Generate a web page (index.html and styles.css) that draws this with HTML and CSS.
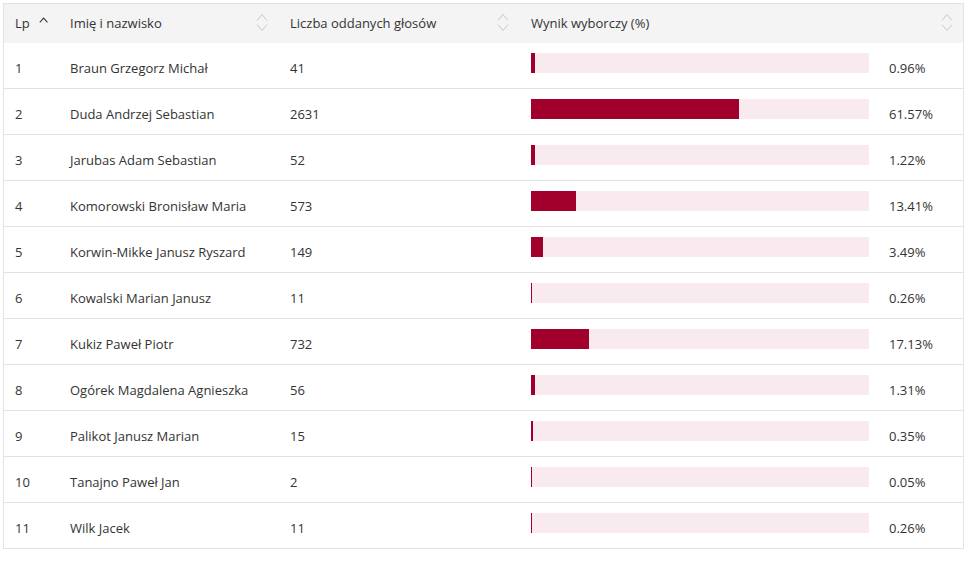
FILE: index.html
```html
<!DOCTYPE html>
<html lang="pl">
<head>
<meta charset="utf-8">
<title>Wyniki</title>
<link rel="stylesheet" href="styles.css">
</head>
<body>
<div class="results">
  <div class="head">
    <div class="hcell hcell-lp">
      <span>Lp</span>
      <svg class="sort-up" width="12" height="8" viewBox="0 0 12 8"><path d="M1 7 L6 1.5 L11 7" fill="none" stroke="#333" stroke-width="1.3"/></svg>
    </div>
    <div class="hcell">
      <span>Imię i nazwisko</span>
      <svg class="sort" width="12" height="20" viewBox="0 0 12 20"><path d="M1 7.5 L6 1.5 L11 7.5 M1 11.5 L6 17.5 L11 11.5" fill="none" stroke="#c8c8c8" stroke-width="1"/></svg>
    </div>
    <div class="hcell">
      <span>Liczba oddanych głosów</span>
      <svg class="sort" width="12" height="20" viewBox="0 0 12 20"><path d="M1 7.5 L6 1.5 L11 7.5 M1 11.5 L6 17.5 L11 11.5" fill="none" stroke="#c8c8c8" stroke-width="1"/></svg>
    </div>
    <div class="hcell">
      <span>Wynik wyborczy (%)</span>
      <svg class="sort" width="12" height="20" viewBox="0 0 12 20"><path d="M1 7.5 L6 1.5 L11 7.5 M1 11.5 L6 17.5 L11 11.5" fill="none" stroke="#c8c8c8" stroke-width="1"/></svg>
    </div>
  </div>

  <div class="row"><div class="cell">1</div><div class="cell">Braun Grzegorz Michał</div><div class="cell">41</div><div class="cell cell-bar"><div class="bar"><div class="fill" style="width:4px"></div></div><span class="pct">0.96%</span></div></div>
  <div class="row"><div class="cell">2</div><div class="cell">Duda Andrzej Sebastian</div><div class="cell">2631</div><div class="cell cell-bar"><div class="bar"><div class="fill" style="width:61.57%"></div></div><span class="pct">61.57%</span></div></div>
  <div class="row"><div class="cell">3</div><div class="cell">Jarubas Adam Sebastian</div><div class="cell">52</div><div class="cell cell-bar"><div class="bar"><div class="fill" style="width:1.22%"></div></div><span class="pct">1.22%</span></div></div>
  <div class="row"><div class="cell">4</div><div class="cell">Komorowski Bronisław Maria</div><div class="cell">573</div><div class="cell cell-bar"><div class="bar"><div class="fill" style="width:13.41%"></div></div><span class="pct">13.41%</span></div></div>
  <div class="row"><div class="cell">5</div><div class="cell">Korwin-Mikke Janusz Ryszard</div><div class="cell">149</div><div class="cell cell-bar"><div class="bar"><div class="fill" style="width:3.49%"></div></div><span class="pct">3.49%</span></div></div>
  <div class="row"><div class="cell">6</div><div class="cell">Kowalski Marian Janusz</div><div class="cell">11</div><div class="cell cell-bar"><div class="bar"><div class="fill" style="width:1px"></div></div><span class="pct">0.26%</span></div></div>
  <div class="row"><div class="cell">7</div><div class="cell">Kukiz Paweł Piotr</div><div class="cell">732</div><div class="cell cell-bar"><div class="bar"><div class="fill" style="width:17.13%"></div></div><span class="pct">17.13%</span></div></div>
  <div class="row"><div class="cell">8</div><div class="cell">Ogórek Magdalena Agnieszka</div><div class="cell">56</div><div class="cell cell-bar"><div class="bar"><div class="fill" style="width:1.31%"></div></div><span class="pct">1.31%</span></div></div>
  <div class="row"><div class="cell">9</div><div class="cell">Palikot Janusz Marian</div><div class="cell">15</div><div class="cell cell-bar"><div class="bar"><div class="fill" style="width:2px"></div></div><span class="pct">0.35%</span></div></div>
  <div class="row"><div class="cell">10</div><div class="cell">Tanajno Paweł Jan</div><div class="cell">2</div><div class="cell cell-bar"><div class="bar"><div class="fill" style="width:1px"></div></div><span class="pct">0.05%</span></div></div>
  <div class="row"><div class="cell">11</div><div class="cell">Wilk Jacek</div><div class="cell">11</div><div class="cell cell-bar"><div class="bar"><div class="fill" style="width:1px"></div></div><span class="pct">0.26%</span></div></div>
</div>
</body>
</html>
```

FILE: styles.css
```css
html, body {
  margin: 0;
  padding: 0;
  background: #fff;
}

body {
  font-family: "Open Sans", "Noto Sans", sans-serif;
  font-size: 13px;
  line-height: 18px;
  color: #333;
  padding: 3px 0 0 3px;
}

.results {
  width: 961px;
  box-sizing: border-box;
  border: 1px solid #e3e3e3;
  border-bottom: none;
}

.head,
.row {
  display: grid;
  grid-template-columns: 54px 220px 241px 1fr;
}

.head {
  height: 39px;
  background: #f4f4f4;
}

.hcell {
  display: flex;
  align-items: center;
  justify-content: space-between;
  padding: 0 10px 2px 12px;
}

.hcell-lp {
  justify-content: flex-start;
  gap: 9px;
  padding-left: 11px;
}

.sort-up {
  display: block;
  margin-top: -5px;
}

.sort {
  display: block;
  margin-top: 1px;
}

.row {
  height: 45px;
  border-bottom: 1px solid #e3e3e3;
}

.cell {
  padding: 16px 12px 0 11px;
  white-space: nowrap;
}

.cell:nth-child(2),
.cell:nth-child(3),
.cell-bar {
  padding-left: 12px;
}

.cell-bar {
  display: flex;
  align-items: flex-start;
  padding-top: 10px;
}

.bar {
  width: 338px;
  height: 20px;
  background: #f8eaee;
  flex: none;
}

.fill {
  height: 100%;
  background: #a1002d;
}

.pct {
  margin-left: 20px;
  padding-top: 6px;
}
```
